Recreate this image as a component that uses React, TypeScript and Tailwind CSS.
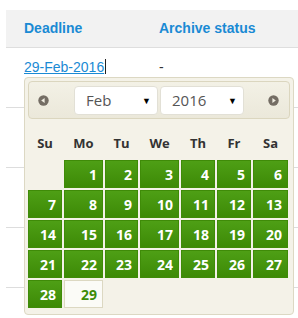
import React from "react";

const cols = "grid grid-cols-[34px_39px_33px_39px_34px_34px_35px] gap-[2px]";
const days = ["Su", "Mo", "Tu", "We", "Th", "Fr", "Sa"];
const cells: (number | null)[] = [null, ...Array.from({ length: 29 }, (_, i) => i + 1)];

function Arrow({ dir }: { dir: "l" | "r" }) {
  return (
    <svg width="11" height="11" viewBox="0 0 11 11">
      <circle cx="5.5" cy="5.5" r="5.2" fill="#746d64" />
      {dir === "l" ? (
        <path d="M3.2 5.5 L6.6 3 L6.6 8 Z" fill="#f0ede2" />
      ) : (
        <path d="M7.8 5.5 L4.4 3 L4.4 8 Z" fill="#f0ede2" />
      )}
    </svg>
  );
}

function Sel({ text }: { text: string }) {
  return (
    <div className="w-[84px] h-[29px] bg-white border border-[#e2e0d6] rounded-[4px] flex items-center justify-between pl-[11px] pr-[6px] text-[15px] text-[#555]" style={{ fontFamily: '"Open Sans", sans-serif' }}>
      <span>{text}</span>
      <span className="text-[9px] text-black leading-none">▼</span>
    </div>
  );
}

export default function App() {
  return (
    <div className="relative w-[298px] h-[318px] bg-white overflow-hidden" style={{ fontFamily: '"Liberation Sans", Arial, sans-serif' }}>
      <div className="ml-[6px] mt-[10px]">
        <div className="h-[38px] bg-[#f2f2f2] border-b border-[#dedede] flex items-center text-[14px] font-bold text-[#1a8ad4]">
          <div className="w-[153px] pl-[18px]">Deadline</div>
          <div>Archive status</div>
        </div>
        <div className="h-[60px] border-b border-[#dddddd] flex pt-[11px] text-[14px]">
          <div className="w-[153px] pl-[18px] flex items-start">
            <span className="text-[#1a8ad4] underline leading-[16px]">29-Feb-2016</span>
            <span className="w-px h-[15px] bg-[#222] ml-[1px]" />
          </div>
          <div className="text-[#333] leading-[16px]">-</div>
        </div>
        <div className="h-[60px] border-b border-[#dddddd]" />
        <div className="h-[60px] border-b border-[#dddddd]" />
        <div className="h-[60px] border-b border-[#dddddd]" />
      </div>

      <div className="absolute left-[24px] top-[77px] w-[270px] h-[238px] bg-[#f4f2e8] border border-[#dcd8c3] rounded-[4px] p-[3px]" style={{ fontFamily: '"Open Sans", sans-serif' }}>
        <div className="h-[38px] w-[262px] border border-[#dbd6bf] rounded-[4px] bg-gradient-to-b from-[#f3f1e6] to-[#ebe8da] flex items-center pl-[9px]">
          <Arrow dir="l" />
          <div className="ml-[25px] flex gap-[2px]">
            <Sel text="Feb" />
            <Sel text="2016" />
          </div>
          <div className="ml-[24px]">
            <Arrow dir="r" />
          </div>
        </div>
        <div className={`${cols} mt-[15px] text-[13px] font-bold text-[#333] text-center leading-[18px]`}>
          {days.map((d) => (
            <div key={d}>{d}</div>
          ))}
        </div>
        <div className={`${cols} mt-[8px]`}>
          {cells.map((c, i) =>
            c === null ? (
              <div key={i} className="h-[28px]" />
            ) : c === 29 ? (
              <div key={i} className="h-[28px] bg-[#fbfbf7] border border-[#dcd8c2] text-[#3e8c08] font-bold text-[14px] flex items-center justify-end pr-[5px]">
                {c}
              </div>
            ) : (
              <div key={i} className="h-[28px] bg-gradient-to-b from-[#4e9f15] to-[#3d8a06] border border-[#3f8b08] text-white font-bold text-[14px] flex items-center justify-end pr-[5px]">
                {c}
              </div>
            )
          )}
        </div>
      </div>
    </div>
  );
}
